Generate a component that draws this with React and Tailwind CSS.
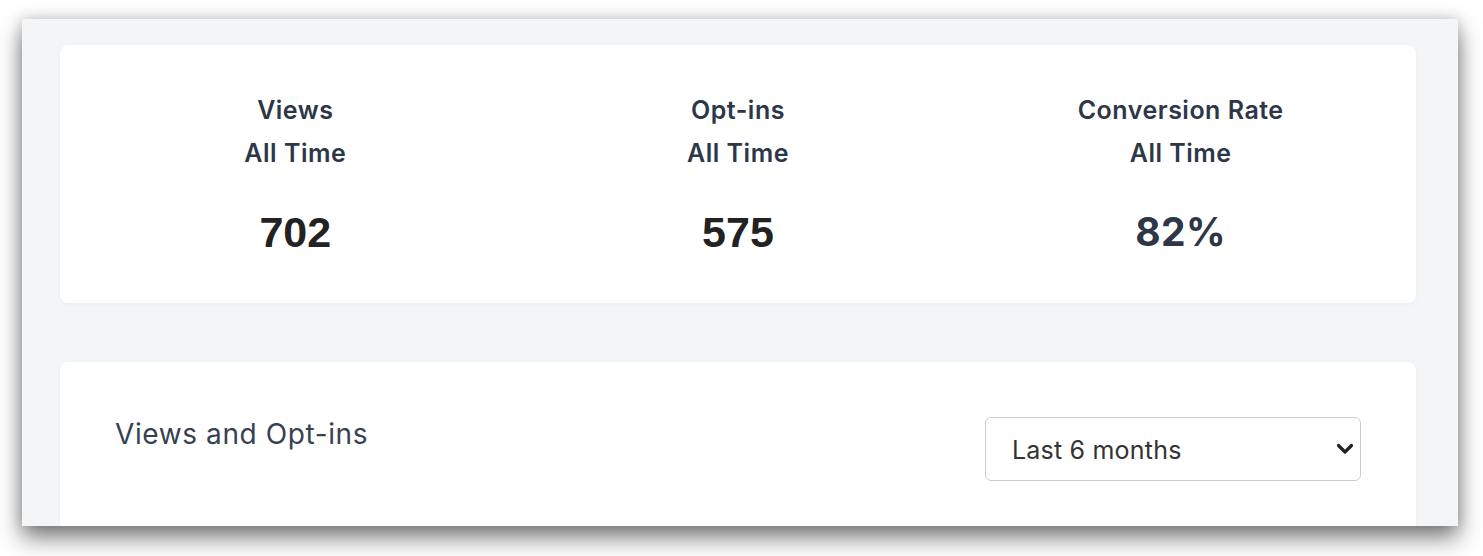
import React from "react";

function Stat({ label, value, valueClass }) {
  return (
    <div className="flex flex-col items-center">
      <div className="text-[25px] font-semibold leading-[43px] text-[#2d3748] tracking-[0.5px]">{label}</div>
      <div className="text-[25px] font-semibold leading-[43px] text-[#2d3748] tracking-[0.5px]">All Time</div>
      <div className={"mt-[35px] leading-[44px] " + valueClass}>{value}</div>
    </div>
  );
}

export default function App() {
  return (
    <div className="w-[1483px] h-[556px] bg-white relative" style={{ fontFamily: "Inter, 'Noto Sans', sans-serif" }}>
      <div className="absolute left-[22px] top-[19px] w-[1436px] h-[507px] bg-[#f4f5f7] overflow-hidden shadow-[0_12px_22px_rgba(0,0,0,0.5),0_0_14px_rgba(0,0,0,0.18)]">
        <div className="pt-[26px] pl-[38px] pr-[42px] flex flex-col gap-[59px]">
          <div className="h-[258px] bg-white rounded-[8px] shadow-[0_1px_4px_rgba(0,0,0,0.04)] px-[14px] pt-[44px] grid grid-cols-3">
            <Stat
              label="Views"
              value="702"
              valueClass="text-[43px] font-bold text-[#222] font-['Liberation_Sans',Arial,sans-serif]"
            />
            <Stat
              label="Opt-ins"
              value="575"
              valueClass="text-[43px] font-bold text-[#222] font-['Liberation_Sans',Arial,sans-serif]"
            />
            <Stat
              label="Conversion Rate"
              value="82%"
              valueClass="text-[39px] font-bold text-[#2d3748] tracking-[0.5px]"
            />
          </div>
          <div className="h-[300px] bg-white rounded-[8px] shadow-[0_1px_4px_rgba(0,0,0,0.04)] px-[55px] pt-[55px] flex justify-between items-start">
            <div className="text-[28px] leading-[40px] mt-[-3px] text-[#374151] tracking-[0.6px]">Views and Opt-ins</div>
            <div className="w-[376px] h-[64px] border border-[#c9cdd2] rounded-[6px] flex items-center justify-between pl-[26px] pr-[6px]">
              <span className="text-[25px] text-[#333] tracking-[0.2px] mt-[3px]">Last 6 months</span>
              <svg width="18" height="12" viewBox="0 0 18 12" fill="none">
                <path d="M2.5 2.5 L9 9 L15.5 2.5" stroke="#222" strokeWidth="3.2" strokeLinecap="round" strokeLinejoin="round" />
              </svg>
            </div>
          </div>
        </div>
      </div>
    </div>
  );
}
